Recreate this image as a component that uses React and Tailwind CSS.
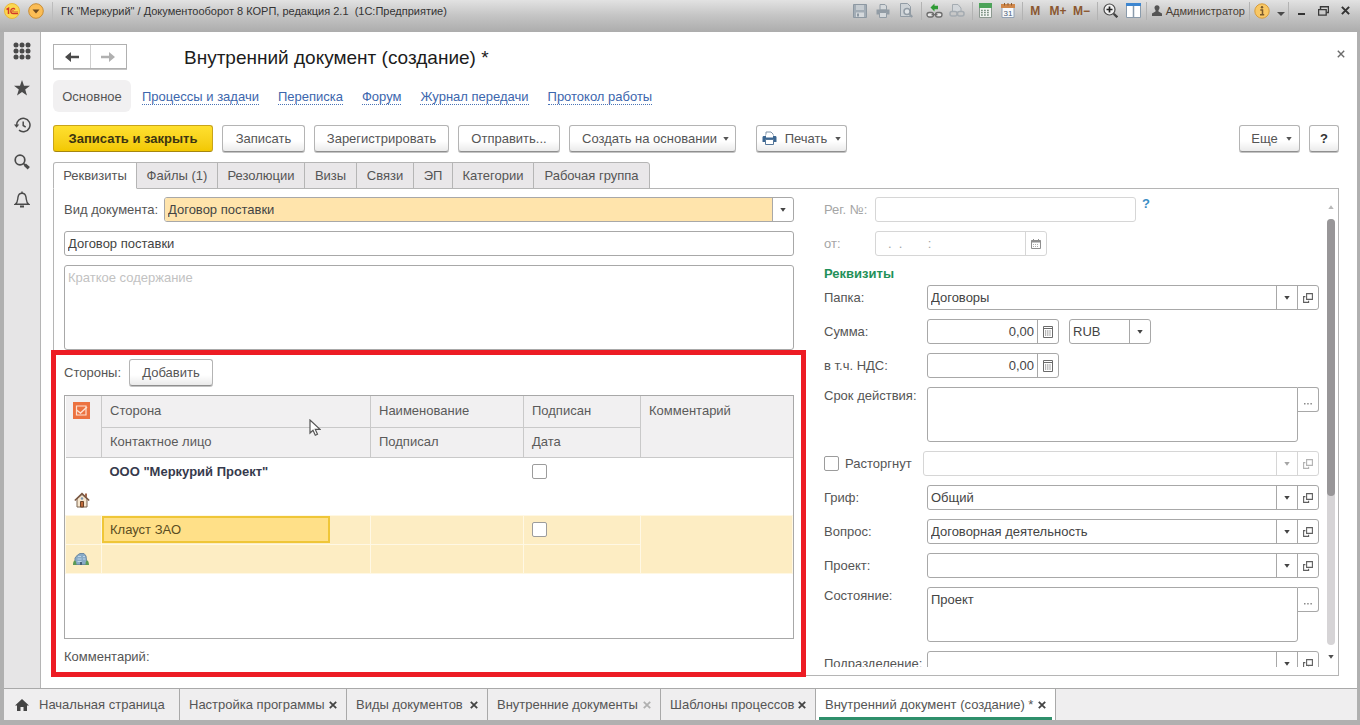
import React from 'react';

const PAGE_LINKS = ['Процессы и задачи', 'Переписка', 'Форум', 'Журнал передачи', 'Протокол работы'];

const FORM_TABS = [
    { label: 'Реквизиты', width: 'w-[84px]', active: true },
    { label: 'Файлы (1)', width: 'w-[82px]' },
    { label: 'Резолюции', width: 'w-[88px]' },
    { label: 'Визы', width: 'w-[53px]' },
    { label: 'Связи', width: 'w-[58px]' },
    { label: 'ЭП', width: 'w-[40px]' },
    { label: 'Категории', width: 'w-[82px]' },
    { label: 'Рабочая группа', width: 'w-[117px]' },
];

const WINDOW_TABS = [
    { label: 'Настройка программы', width: 'w-[167px]' },
    { label: 'Виды документов', width: 'w-[141px]' },
    { label: 'Внутренние документы', width: 'w-[173px]', dim: true },
    { label: 'Шаблоны процессов', width: 'w-[155px]' },
    { label: 'Внутренний документ (создание) *', width: 'w-[241px]', active: true },
];

/* ---------- small glyphs ---------- */

function Caret({ className = '' }) {
    return (
        <svg width="6" height="4" viewBox="0 0 6 4" className={`shrink-0 ${className}`} aria-hidden="true">
            <path d="M.3 0h5.400L3 3.700z" fill="currentColor" />
        </svg>
    );
}

function Cross({ size = 8, width = 1.8 }) {
    return (
        <svg width={size} height={size} viewBox="0 0 8 8" aria-hidden="true">
            <path d="M.8.8l6.400 6.400M7.200.8L.8 7.200" stroke="currentColor" strokeWidth={width} fill="none" />
        </svg>
    );
}

function OpenIcon() {
    return (
        <svg width="10" height="10" viewBox="0 0 10 10" fill="none" stroke="currentColor" strokeWidth="1.100" opacity=".85" aria-hidden="true">
            <path d="M3.600.6h5.800v5.800H3.600z" />
            <path d="M2.400 3.600H.6v5.800h5V7.800" />
        </svg>
    );
}

function CalcIcon() {
    return (
        <svg width="10" height="12" viewBox="0 0 10 12" fill="none" stroke="#6b6b6b" aria-hidden="true">
            <path d="M.5.5h9v11h-9zM.5 2.500h9" />
            <path d="M2 5h6M2 7h6M2 9h6" strokeDasharray="1.200 1" />
        </svg>
    );
}

function CalendarIcon() {
    return (
        <svg width="10" height="10" viewBox="0 0 10 10" fill="none" stroke="#8f8f8f" aria-hidden="true">
            <path d="M.5 1.500h9v8h-9z" />
            <path d="M0 2.500h10" strokeWidth="2" />
            <path d="M2.500 0v1M7.500 0v1" />
            <path d="M2 5.500h6M2 7.500h6" strokeDasharray="1 1" opacity=".7" />
        </svg>
    );
}

/* ---------- title bar ---------- */

function Divider() {
    return <span className="mr-px h-[18px] w-px bg-[#b3b3b3]" />;
}

function ToolButton({ label, children, className = 'w-[23px]' }) {
    return (
        <button type="button" aria-label={label} className={`flex h-5 shrink-0 items-center justify-center ${className}`}>
            {children}
        </button>
    );
}

function TitleBar() {
    return (
        <header className="flex h-8 shrink-0 items-start bg-linear-to-b from-[#e2e2e2] via-[#c4c4c4] to-[#acacac] text-[11px] text-[#333]">
            <div className="flex h-[21px] min-w-0 flex-1 items-center pl-1">
                <svg width="16" height="16" viewBox="0 0 16 16" aria-hidden="true">
                    <circle cx="8" cy="8" r="7.500" fill="#fbd84f" stroke="#e9b63a" />
                    <path d="M2.500 6.500L4.500 5.300V11" fill="none" stroke="#d2382b" strokeWidth="1.500" />
                    <path d="M11 6.500C9.800 4.700 6.800 5.300 6.800 8c0 1.700 1.200 2.600 2.600 2.600H14" fill="none" stroke="#d2382b" strokeWidth="1.300" />
                    <path d="M9.800 7.300c-.8-.3-1.300.1-1.300.7 0 .7.500 1 1.200 1H14" fill="none" stroke="#d2382b" strokeWidth=".8" />
                </svg>
                <button type="button" aria-label="Главное меню" className="ml-2">
                    <svg width="16" height="16" viewBox="0 0 16 16" aria-hidden="true">
                        <circle cx="8" cy="8" r="7.300" fill="#fbbd55" stroke="#c98d34" />
                        <path d="M4.500 6.500h7L8 10.500z" fill="#6d4a20" />
                    </svg>
                </button>
                <span className="mx-2 h-[18px] w-px bg-[#bcbcbc]" />
                <h1 className="truncate whitespace-pre">ГК "Меркурий" / Документооборот 8 КОРП, редакция 2.1  (1С:Предприятие)</h1>
            </div>
            <div className="flex h-[21px] shrink-0 items-center pr-1">
                <ToolButton label="Сохранить">
                    <svg width="14" height="14" viewBox="0 0 14 14">
                        <path d="M.5.5h13v13h-13z" fill="#a3adb6" stroke="#8d98a2" />
                        <path d="M3 1h8v5H3z" fill="#c6ccd1" />
                        <path d="M3 8.500h8V13H3z" fill="#d5d9dc" />
                        <path d="M5 9.500v3" stroke="#8d98a2" strokeWidth="2" />
                    </svg>
                </ToolButton>
                <ToolButton label="Печать">
                    <svg width="14" height="14" viewBox="0 0 14 14">
                        <path d="M4 .5h5L10.500 2v4H4z" fill="#d5d9dc" stroke="#929ca5" />
                        <path d="M.5 5.500h13v5H.5z" fill="#929ca5" />
                        <path d="M3.500 8.500h7v5h-7z" fill="#d5d9dc" stroke="#929ca5" />
                    </svg>
                </ToolButton>
                <ToolButton label="Предварительный просмотр">
                    <svg width="14" height="15" viewBox="0 0 14 15" fill="none" stroke="#929ca5">
                        <path d="M1.500 13.500V.5h7l3 3v10z" fill="#cdd2d6" />
                        <circle cx="8" cy="8.500" r="3" fill="#dfe3e6" strokeWidth="1.500" />
                        <path d="M10.300 11l3 3" strokeWidth="2" />
                    </svg>
                </ToolButton>
                <span className="w-[3px]" />
                <Divider />
                <ToolButton label="Добавить ссылку">
                    <svg width="17" height="16" viewBox="0 0 17 16" fill="none">
                        <rect x="1" y="9.500" width="6.500" height="4.500" rx="2.200" fill="#e8e8e8" stroke="#6c6c6c" strokeWidth="1.300" />
                        <rect x="9.500" y="9.500" width="6.500" height="4.500" rx="2.200" fill="#e8e8e8" stroke="#6c6c6c" strokeWidth="1.300" />
                        <path d="M5.500 11.700h6" stroke="#6c6c6c" strokeWidth="1.300" />
                        <path d="M8.500 8.500L4.500 4.500 8.500.5v2.300h3.500v3.400H8.500z" fill="#2f9b35" />
                    </svg>
                </ToolButton>
                <ToolButton label="Перейти по ссылке">
                    <svg width="16" height="15" viewBox="0 0 16 15" fill="none" stroke="#a4abb1">
                        <path d="M3.500 8V1.500H9L12 5v3" fill="#d2d6da" />
                        <rect x="1" y="8.500" width="7" height="4.500" rx="2" strokeWidth="1.500" />
                        <rect x="8.500" y="8.500" width="6.500" height="4.500" rx="2" strokeWidth="1.500" />
                    </svg>
                </ToolButton>
                <span className="w-[3px]" />
                <Divider />
                <ToolButton label="Калькулятор">
                    <svg width="13" height="15" viewBox="0 0 13 15">
                        <path d="M.5.5h12v14H.5z" fill="#f2f4f2" stroke="#8c9890" />
                        <path d="M0 0h13v5H0z" fill="#4da35a" />
                        <path d="M2 7.500h9M2 9.700h9M2 12h9" stroke="#7d9284" strokeDasharray="1.800 1.200" strokeWidth="1.300" />
                    </svg>
                </ToolButton>
                <ToolButton label="Календарь">
                    <svg width="14" height="15" viewBox="0 0 14 15">
                        <path d="M1 3h12v11.500H1z" fill="#f7f9fb" stroke="#93a2b4" />
                        <path d="M0 1h14v4H0z" fill="#d0874a" />
                        <path d="M3.500 0v2.500M7 0v2.500M10.500 0v2.500" stroke="#8a5a30" />
                        <text x="7" y="12.500" textAnchor="middle" fontSize="8" fill="#4b5d78">31</text>
                    </svg>
                </ToolButton>
                <span className="w-[2px]" />
                <Divider />
                <ToolButton label="M" className="w-[23px] text-[12px] font-bold text-[#8a5730]">M</ToolButton>
                <ToolButton label="M+" className="w-[23px] text-[12px] font-bold text-[#8a5730]">M+</ToolButton>
                <ToolButton label="M-" className="w-[24px] text-[12px] font-bold text-[#8a5730]">M−</ToolButton>
                <span className="w-[3px]" />
                <Divider />
                <ToolButton label="Масштаб">
                    <svg width="15" height="15" viewBox="0 0 15 15" fill="none">
                        <circle cx="6.500" cy="6.500" r="5.500" fill="#f1f1f1" stroke="#4a4a4a" strokeWidth="1.200" />
                        <path d="M6.500 3.500v6M3.500 6.500h6" stroke="#222" strokeWidth="1.700" />
                        <path d="M10.700 10.700l3.600 3.600" stroke="#444" strokeWidth="2.300" />
                    </svg>
                </ToolButton>
                <ToolButton label="Разделить окно">
                    <svg width="15" height="15" viewBox="0 0 15 15">
                        <path d="M.5.5h14v14H.5z" fill="#fff" stroke="#8a9bab" />
                        <path d="M0 0h15v3H0z" fill="#3d86d0" />
                        <path d="M7.500 3v12" stroke="#8a9bab" strokeWidth="1.500" />
                    </svg>
                </ToolButton>
                <span className="w-px" />
                <Divider />
                <button type="button" className="flex h-5 items-center gap-1 px-1">
                    <svg width="10" height="11" viewBox="0 0 10 11" aria-hidden="true">
                        <circle cx="5" cy="2.800" r="2.500" fill="#555" />
                        <path d="M3.500 4.500h3v2L10 8.500V11H0V8.500l3.500-2z" fill="#555" />
                    </svg>
                    <span className="text-[#4a3f35]">Администратор</span>
                </button>
                <Divider />
                <ToolButton label="Справка" className="w-[22px]">
                    <svg width="16" height="16" viewBox="0 0 16 16">
                        <circle cx="8" cy="8" r="7.200" fill="#f9c865" stroke="#d79c3a" />
                        <circle cx="8" cy="4.300" r="1.200" fill="#7a5a2c" />
                        <path d="M6.300 7H8.500v4.500M6 11.700h4.200" stroke="#7a5a2c" strokeWidth="1.500" fill="none" />
                    </svg>
                </ToolButton>
                <ToolButton label="Ещё" className="w-[15px] pt-1.5">
                    <svg width="8" height="4" viewBox="0 0 8 4"><path d="M0 0h8L4 4z" fill="#4a4a4a" /></svg>
                </ToolButton>
                <Divider />
                <ToolButton label="Свернуть" className="w-[22px] pt-1.5">
                    <svg width="7" height="2" viewBox="0 0 7 2"><path d="M0 0h7v2H0z" fill="#333" /></svg>
                </ToolButton>
                <ToolButton label="Восстановить" className="w-[22px]">
                    <svg width="11" height="10" viewBox="0 0 11 10" fill="none" stroke="#3a3a3a">
                        <path d="M2.500 3V.8h8v5.700H8.500" strokeWidth="1.400" />
                        <path d="M.6 3.600h7.600v5.600H.6z" strokeWidth="1.300" />
                    </svg>
                </ToolButton>
                <ToolButton label="Закрыть" className="w-[22px]"><Cross size={9} /></ToolButton>
            </div>
        </header>
    );
}

/* ---------- left rail ---------- */

function SideRail() {
    const btn = 'flex h-[18px] w-[18px] items-center justify-center';
    return (
        <nav aria-label="Разделы" className="flex w-[37px] shrink-0 flex-col items-center gap-[19px] border-r border-[#b5b5b5] bg-[#e6e5e6] pt-2.5 text-[#4a4a4a]">
            <button type="button" aria-label="Меню" className={btn}>
                <svg width="18" height="18" viewBox="0 0 18 18" fill="currentColor">
                    {[3, 9, 15].map(y => [3, 9, 15].map(x => <circle key={`${x}-${y}`} cx={x} cy={y} r="2.500" />))}
                </svg>
            </button>
            <button type="button" aria-label="Избранное" className={btn}>
                <svg width="16" height="16" viewBox="0 0 16 16" fill="currentColor">
                    <path d="M8 0l2 5.800h6l-4.800 3.700L13 15.500 8 12l-5 3.500 1.800-6L0 5.800h6z" />
                </svg>
            </button>
            <button type="button" aria-label="История" className={btn}>
                <svg width="17" height="16" viewBox="0 0 17 16" fill="none" stroke="currentColor" strokeWidth="1.500">
                    <path d="M2.600 8.500A6.700 6.700 0 1 1 5 13.200" />
                    <path d="M9.200 4.500v4l2.500 1.600" />
                    <path d="M0 7.500h5.200L2.600 10.700z" fill="currentColor" stroke="none" />
                </svg>
            </button>
            <button type="button" aria-label="Поиск" className={btn}>
                <svg width="16" height="16" viewBox="0 0 16 16" fill="none" stroke="currentColor">
                    <circle cx="6" cy="6" r="4.800" strokeWidth="1.700" />
                    <path d="M9.500 9.500l1.500 1.500" strokeWidth="1.700" />
                    <path d="M10.800 10.600l4 3.600" strokeWidth="3.200" />
                </svg>
            </button>
            <button type="button" aria-label="Уведомления" className={btn}>
                <svg width="16" height="17" viewBox="0 0 16 17" fill="none" stroke="currentColor" strokeWidth="1.400">
                    <path d="M1.200 13.300C4 11.500 3.500 9 4 6.200 4.500 3.500 6 2.300 8 2.300s3.500 1.200 4 3.900c.5 2.800 0 5.300 2.800 7.100z" />
                    <path d="M8 .5v1.800" />
                    <path d="M6 15.500h4" strokeWidth="2" />
                </svg>
            </button>
        </nav>
    );
}

/* ---------- form controls ---------- */

function PushButton({ children, className = '' }) {
    return (
        <button type="button"
            className={`flex h-[27px] shrink-0 items-center justify-center rounded-[3px] border border-[#b4b4b4] border-b-[#8f8f8f] bg-linear-to-b from-white from-60% to-[#ebebeb] shadow-[0_1px_0_#c4c4c4] ${className}`}>
            {children}
        </button>
    );
}

function CellButton({ label, children }) {
    return (
        <button type="button" aria-label={label} className="flex w-[21px] shrink-0 items-center justify-center border-l border-inherit">
            {children}
        </button>
    );
}

const BOX = 'flex h-[25px] min-w-0 overflow-hidden rounded-[3px] border bg-white';

function DropField({ id, value, open, dim, className = 'flex-1', fill = '' }) {
    return (
        <div className={`${BOX} ${className} ${dim ? 'border-[#d6d6d6] text-[#a5a5a5]' : 'border-[#a8a8a8] text-[#444]'}`}>
            <select id={id} disabled={dim} defaultValue={value} className={`min-w-0 flex-1 appearance-none px-[3px] outline-none ${fill}`}>
                <option>{value}</option>
            </select>
            <span className="flex w-[21px] shrink-0 items-center justify-center border-l border-inherit"><Caret /></span>
            {open && <CellButton label="Открыть"><OpenIcon /></CellButton>}
        </div>
    );
}

function AmountField({ id }) {
    return (
        <div className={`${BOX} w-[132px] border-[#a8a8a8] text-[#444]`}>
            <input id={id} type="text" defaultValue="0,00" className="min-w-0 flex-1 px-[3px] text-right outline-none" />
            <CellButton label="Калькулятор"><CalcIcon /></CellButton>
        </div>
    );
}

function MemoField({ id, value = '' }) {
    return (
        <div className="flex min-w-0 flex-1 items-start text-[#444]">
            <textarea id={id} defaultValue={value} className="block h-[55px] min-w-0 flex-1 resize-none rounded-[3px] rounded-tr-none border border-[#a8a8a8] px-[3px] py-1 outline-none" />
            <button type="button" aria-label="Выбрать" className="flex h-[25px] w-[21px] items-center justify-center rounded-r-[3px] border border-l-0 border-[#a8a8a8] pt-2">
                <svg width="8" height="2" viewBox="0 0 8 2"><path d="M0 0h1.500v1.500H0zM3.200 0h1.500v1.500H3.200zM6.400 0h1.500v1.500H6.400z" fill="#8a8a8a" /></svg>
            </button>
        </div>
    );
}

function Row({ label, htmlFor, tall, children }) {
    return (
        <div className={`flex shrink-0 ${tall ? 'items-start' : 'items-center'}`}>
            <label htmlFor={htmlFor} className={`w-[103px] shrink-0 whitespace-nowrap ${tall ? 'pt-px' : ''}`}>{label}</label>
            {children}
        </div>
    );
}

const CHECK = 'block size-[15px] shrink-0 appearance-none rounded-[2px] border border-[#9c9c9c] bg-white';

/* ---------- parties table ---------- */

function PartiesTable() {
    const th = 'border-[#c9c9c9] px-2 text-left font-normal';
    const line = 'border-[#fff8e4]';
    return (
        <div className="h-[244px] border border-[#a8a8a8]">
            <table className="w-full table-fixed border-collapse">
                <colgroup>
                    <col className="w-[36px]" />
                    <col className="w-[269px]" />
                    <col className="w-[153px]" />
                    <col className="w-[117px]" />
                    <col />
                </colgroup>
                <thead className="bg-[#f1f0f1] text-[#5a5a5a]">
                    <tr className="h-[31px]">
                        <th rowSpan={2} className="border-r border-b border-[#c9c9c9] pt-[6px] pl-[7px] text-left align-top">
                            <svg width="17" height="17" viewBox="0 0 17 17" role="img" aria-label="Статус">
                                <path d="M0 0h17v17H0z" fill="#ec7240" />
                                <path d="M3.500 4h9.500v9H3.500z" fill="none" stroke="#fde0cf" strokeWidth="1.200" />
                                <path d="M3.500 8l4 3 6.500-6" fill="none" stroke="#fde0cf" strokeWidth="1.400" />
                            </svg>
                        </th>
                        <th className={`${th} border-r border-b`}>Сторона</th>
                        <th className={`${th} border-r border-b`}>Наименование</th>
                        <th className={`${th} border-r border-b`}>Подписан</th>
                        <th rowSpan={2} className={`${th} border-b pt-[7px] align-top`}>Комментарий</th>
                    </tr>
                    <tr className="h-[30px]">
                        <th className={`${th} border-r border-b`}>Контактное лицо</th>
                        <th className={`${th} border-r border-b`}>Подписал</th>
                        <th className={`${th} border-r border-b`}>Дата</th>
                    </tr>
                </thead>
                <tbody>
                    <tr className="h-[29px]">
                        <td />
                        <td className="px-2 font-bold text-[#363a4c]">ООО "Меркурий Проект"</td>
                        <td />
                        <td className="px-2"><input type="checkbox" aria-label="Подписан: Меркурий Проект" className={CHECK} /></td>
                        <td rowSpan={2} />
                    </tr>
                    <tr className="h-[29px]">
                        <td className="pl-2">
                            <svg width="16" height="16" viewBox="0 0 16 16" role="img" aria-label="Наша организация">
                                <path d="M3 7v8h10V7L8 2.500z" fill="#f6e6cf" stroke="#7b6450" />
                                <path d="M11 1.500h2v4l-2-1.700z" fill="#a3674a" />
                                <path d="M.8 8.500L8 1.500l7.200 7" fill="none" stroke="#77543f" strokeWidth="1.500" />
                                <path d="M6.500 9.500h3V15h-3z" fill="#c06a38" stroke="#6c4327" />
                                <circle cx="8" cy="6.500" r="1.200" fill="#7d98b2" />
                            </svg>
                        </td>
                        <td /><td /><td />
                    </tr>
                    <tr className="h-[29px] bg-[#fdedc3]">
                        <td className={`border ${line}`} />
                        <td className={`border ${line}`}>
                            <div className="mr-10 flex h-[27px] items-center border-2 border-[#efc638] bg-[#ffe088] px-[6px] text-[#5b4d22]">Клауст ЗАО</div>
                        </td>
                        <td className={`border ${line}`} />
                        <td className={`border px-2 ${line}`}><input type="checkbox" aria-label="Подписан: Клауст ЗАО" className={CHECK} /></td>
                        <td rowSpan={2} className={`border ${line}`} />
                    </tr>
                    <tr className="h-[29px] bg-[#fdedc3]">
                        <td className={`border pl-[7px] ${line}`}>
                            <svg width="16" height="14" viewBox="0 0 16 14" role="img" aria-label="Контрагент">
                                <path d="M2 12.500V6l2.500-3L7 1.500h4L13 4l1 8.500z" fill="#88aac6" stroke="#6f8ba3" />
                                <path d="M5 4.500h3M4.500 7h4M4.500 9.500h4M10 4.500h2M10 7h2.500" stroke="#bdd5e8" strokeWidth="1.200" />
                                <path d="M0 13c0-3 .8-4.500 1.800-4.500S3.500 11 3.500 13zM12.500 13c0-3.500.8-4.500 1.700-4.500S16 10.500 16 13z" fill="#5b9a54" />
                                <path d="M7 10h2v3H7z" fill="#46617a" />
                            </svg>
                        </td>
                        <td className={`border ${line}`} />
                        <td className={`border ${line}`} />
                        <td className={`border ${line}`} />
                    </tr>
                </tbody>
            </table>
        </div>
    );
}

function LeftColumn() {
    return (
        <div className="relative flex w-[730px] shrink-0 flex-col">
            <div className="flex items-center">
                <label htmlFor="kind" className="w-[100px] whitespace-nowrap">Вид документа:</label>
                <DropField id="kind" value="Договор поставки" fill="bg-[#ffe4ac]" />
            </div>
            <input type="text" aria-label="Наименование" defaultValue="Договор поставки"
                className="mt-[9px] h-[25px] rounded-[3px] border border-[#a8a8a8] px-[3px] text-[#444] outline-none" />
            <textarea aria-label="Краткое содержание" placeholder="Краткое содержание"
                className="mt-[9px] block h-[85px] resize-none rounded-[3px] border border-[#a8a8a8] px-[3px] py-1 outline-none placeholder:text-[#c2c2c2]" />
            <div className="mt-[9px] mb-[9px] flex items-center">
                <span className="w-[65px]">Стороны:</span>
                <PushButton className="w-[84px]">Добавить</PushButton>
            </div>
            <PartiesTable />
            <p className="mt-2.5">Комментарий:</p>

            {/* highlight frame around the parties block */}
            <div className="pointer-events-none absolute -right-3 -left-[13px] top-[153px] h-[327px] border-[5px] border-[#ed1c24]" />

            {/* mouse pointer */}
            <svg width="12" height="18" viewBox="0 0 12 18" className="absolute top-[222px] left-[245px]" aria-hidden="true">
                <path d="M1 1v13l3-2.800 2.300 5 2.200-1-2.200-4.800H11z" fill="#fff" stroke="#555" strokeWidth="1.200" />
            </svg>
        </div>
    );
}

function RightColumn() {
    return (
        <div className="flex min-w-0 flex-1 flex-col overflow-hidden">
            <div className="flex shrink-0 text-[#a5a5a5]">
                <label htmlFor="regnum" className="w-[51px] leading-[25px]">Рег. №:</label>
                <input id="regnum" type="text" disabled className="h-[25px] w-[261px] rounded-[3px] border border-[#d6d6d6]" />
                <button type="button" aria-label="Подсказка" className="ml-1.5 h-3.5 font-bold leading-[14px] text-[#3b8dc4]">?</button>
            </div>
            <div className="mt-[9px] flex shrink-0 text-[#a5a5a5]">
                <label htmlFor="regdate" className="w-[51px] leading-[25px]">от:</label>
                <div className={`${BOX} w-[172px] border-[#d6d6d6]`}>
                    <input id="regdate" type="text" disabled defaultValue=".  .       :" className="min-w-0 flex-1 px-3" />
                    <CellButton label="Выбрать дату"><CalendarIcon /></CellButton>
                </div>
            </div>
            <h3 className="mt-2 h-[21px] shrink-0 font-bold leading-5 text-[#1f9159]">Реквизиты</h3>
            <div className="flex flex-col gap-[9px]">
                <Row label="Папка:" htmlFor="folder"><DropField id="folder" value="Договоры" open /></Row>
                <Row label="Сумма:" htmlFor="sum">
                    <AmountField id="sum" />
                    <div className="ml-2.5 flex" role="group" aria-label="Валюта">
                        <DropField id="currency" value="RUB" className="w-[82px]" />
                    </div>
                </Row>
                <Row label="в т.ч. НДС:" htmlFor="vat"><AmountField id="vat" /></Row>
                <Row label="Срок действия:" htmlFor="term" tall><MemoField id="term" /></Row>
                <div className="flex shrink-0 items-center">
                    <label className="flex w-[99px] items-center gap-1.5">
                        <input type="checkbox" className={CHECK} />
                        Расторгнут
                    </label>
                    <DropField id="cancel" value="" open dim />
                </div>
                <Row label="Гриф:" htmlFor="stamp"><DropField id="stamp" value="Общий" open /></Row>
                <Row label="Вопрос:" htmlFor="topic"><DropField id="topic" value="Договорная деятельность" open /></Row>
                <Row label="Проект:" htmlFor="project"><DropField id="project" value="" open /></Row>
                <Row label="Состояние:" htmlFor="state" tall><MemoField id="state" value="Проект" /></Row>
                <Row label="Подразделение:" htmlFor="dept"><DropField id="dept" value="" open /></Row>
            </div>
        </div>
    );
}

function DocumentForm() {
    return (
        <main className="flex min-w-0 flex-1 flex-col bg-white pr-[18px] pb-3 pl-3">
            <div className="flex items-start pt-3">
                <div className="flex h-[25px] w-[74px] shrink-0 border border-[#b0b0b0] shadow-[0_1px_0_#c4c4c4]">
                    <button type="button" aria-label="Назад" className="flex flex-1 items-center justify-center text-[#4a4a4a]">
                        <svg width="14" height="10" viewBox="0 0 14 10"><path d="M6 0L0 5l6 5V6.300h8V3.700H6z" fill="currentColor" /></svg>
                    </button>
                    <button type="button" aria-label="Вперёд" className="flex flex-1 items-center justify-center border-l border-[#d0d0d0] text-[#b0b0b0]">
                        <svg width="14" height="10" viewBox="0 0 14 10"><path d="M8 0l6 5-6 5V6.200H0V3.800h8z" fill="currentColor" /></svg>
                    </button>
                </div>
                <h2 className="ml-[57px] flex-1 text-[19px] leading-7 text-[#1c1c1c]">Внутренний документ (создание) *</h2>
                <button type="button" aria-label="Закрыть форму" className="-mr-1.5 mt-1.5 text-[#6b6b6b]"><Cross width={1.4} /></button>
            </div>

            <div className="mt-2 flex h-8 items-center gap-[19px]">
                <span className="-mr-2 flex h-8 w-[78px] items-center justify-center rounded-md bg-[#f1f0f1] pt-0.5">Основное</span>
                {PAGE_LINKS.map(text => (
                    <a key={text} href="#" className="mt-0.5 border-b border-dotted border-[#4a73b5] leading-[15px] text-[#3c66ad]">{text}</a>
                ))}
            </div>

            <div className="mt-[13px] flex gap-[9px]">
                <button type="button"
                    className="flex h-[27px] w-[160px] items-center justify-center rounded-[3px] border border-[#c8a41a] border-b-[#a58610] bg-linear-to-b from-[#ffe02e] to-[#f2c800] font-bold text-[#3c3410]">
                    Записать и закрыть
                </button>
                <PushButton className="w-[83px]">Записать</PushButton>
                <PushButton className="w-[135px]">Зарегистрировать</PushButton>
                <PushButton className="w-[102px]">Отправить...</PushButton>
                <PushButton className="w-[167px] gap-1.5 pl-1.5">Создать на основании<Caret /></PushButton>
                <PushButton className="ml-[11px] w-[91px] gap-2">
                    <svg width="15" height="15" viewBox="0 0 15 15" aria-hidden="true">
                        <path d="M4 1h5l2 2v3H4z" fill="#fff" stroke="#7f93a8" />
                        <path d="M.5 6.500C.5 5.500 1 5 2 5h11c1 0 1.500.5 1.500 1.500V11H.5z" fill="#3c6792" />
                        <path d="M4 3.500h7v3H4z" fill="#fff" />
                        <path d="M3.500 8.500h8v5h-8z" fill="#fff" stroke="#55779a" />
                    </svg>
                    Печать
                    <Caret />
                </PushButton>
                <span className="flex-1" />
                <PushButton className="w-[61px] gap-2 pl-1">Еще<Caret /></PushButton>
                <PushButton className="w-[30px] font-bold text-[#333]">?</PushButton>
            </div>

            <div role="tablist" className="mt-[10px] flex">
                {FORM_TABS.map(tab => (
                    <button key={tab.label} type="button" role="tab" aria-selected={!!tab.active}
                        className={`-mr-px h-[27px] border border-[#b5b5b5] last:rounded-tr-[3px] first:rounded-tl-[3px] ${tab.width}
                            ${tab.active ? 'z-10 border-b-white bg-white' : 'bg-[#e9e7e9]'}`}>
                        {tab.label}
                    </button>
                ))}
            </div>
            <section className="-mt-px flex min-h-0 flex-1 gap-[30px] border border-[#b5b5b5] pt-2 pr-[3px] pb-2 pl-2.5">
                <LeftColumn />
                <div className="flex min-w-0 flex-1 gap-2">
                    <RightColumn />
                    <div className="flex w-2 shrink-0 flex-col items-center pt-2 pb-2 text-[#4f4f4f]">
                        <Caret className="rotate-180 text-[#b8b8b8]" />
                        <div className="my-[10px] w-2 flex-1 rounded-full bg-[#d6d4d6]">
                            <div className="h-[65%] w-2 rounded-full bg-[#989698]" />
                        </div>
                        <Caret />
                    </div>
                </div>
            </section>
        </main>
    );
}

function WindowTabs() {
    return (
        <nav aria-label="Открытые окна" className="flex h-8 shrink-0 border-t border-[#a9a9a9] bg-[#efeeef]">
            <button type="button" className="flex w-[175px] items-center gap-2.5 pl-[11px]">
                <svg width="14" height="12" viewBox="0 0 14 12" aria-hidden="true">
                    <path d="M7 0l7 6.500h-2V12H8.500V8h-3v4H2V6.500H0z" fill="#444" />
                </svg>
                Начальная страница
            </button>
            {WINDOW_TABS.map(tab => (
                <div key={tab.label} className={`flex flex-col border-l border-[#a9a9a9] px-[3px] ${tab.width} ${tab.active ? 'border-r bg-white' : ''}`}>
                    <div className="flex flex-1 items-center justify-between px-1.5 pt-[3px]">
                        <button type="button" className="whitespace-nowrap">{tab.label}</button>
                        <button type="button" aria-label="Закрыть" className={tab.dim ? 'text-[#b0b0b0]' : 'text-[#444]'}><Cross /></button>
                    </div>
                    <span className={`h-[3px] ${tab.active ? 'bg-[#2f8f6b]' : ''}`} />
                </div>
            ))}
        </nav>
    );
}

export default function App() {
    return (
        <div className="flex h-screen flex-col bg-[#b0b0b0] font-['Liberation_Sans',Arial,sans-serif] text-[13px] leading-4 text-[#555]">
            <TitleBar />
            <div className="flex min-h-0 flex-1 flex-col border-r-[3px] border-b-[5px] border-l-4 border-[#b0b0b0]">
                <div className="flex min-h-0 flex-1">
                    <SideRail />
                    <DocumentForm />
                </div>
                <WindowTabs />
            </div>
        </div>
    );
}
